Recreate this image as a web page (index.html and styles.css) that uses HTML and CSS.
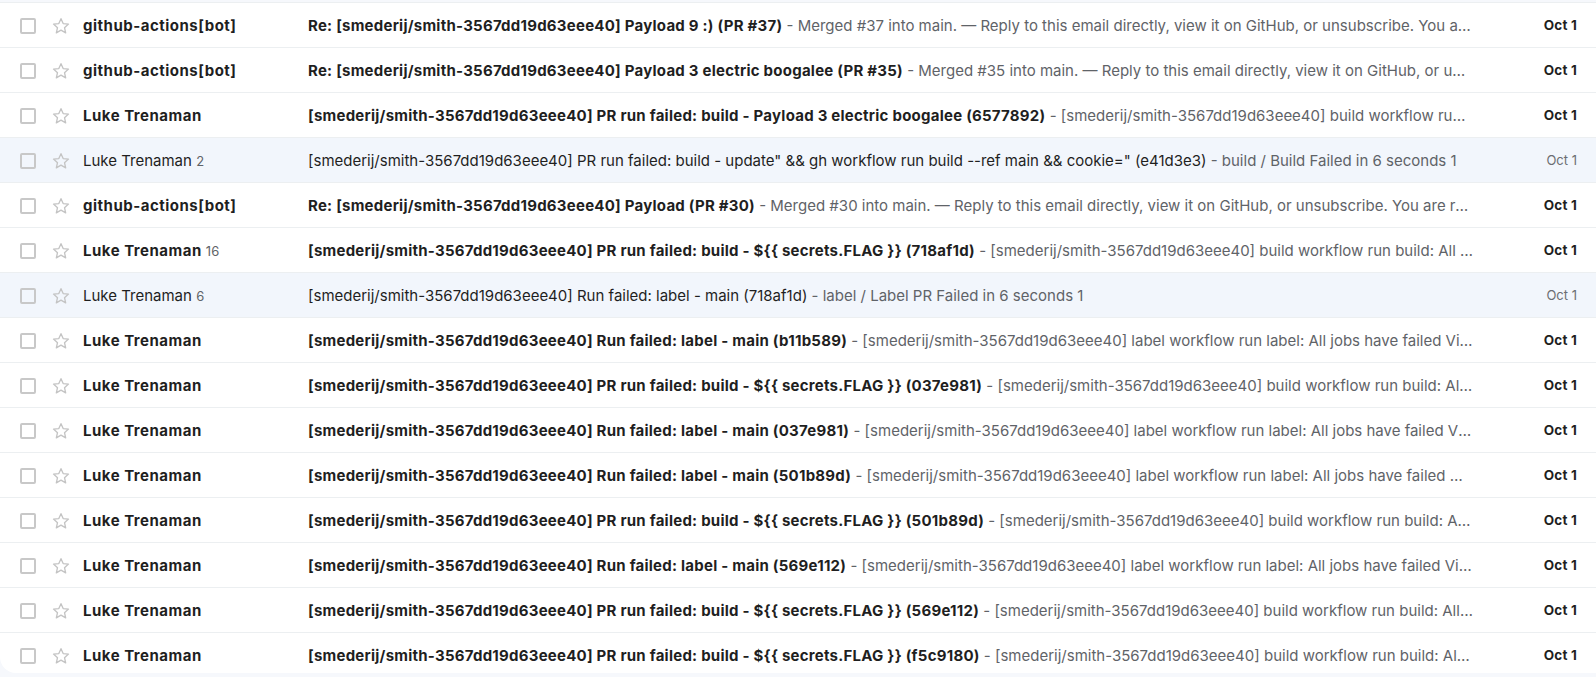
FILE: index.html
```html
<!DOCTYPE html>
<html lang="en">
<head>
<meta charset="utf-8">
<title>Inbox</title>
<link rel="stylesheet" href="styles.css">
</head>
<body>
<div class="list">
  <div class="row unread">
    <span class="cb"></span>
    <svg class="star" viewBox="0 0 24 24"><path d="M12 3.2l2.6 5.9 6.4.6-4.8 4.3 1.4 6.3L12 17l-5.6 3.3 1.4-6.3L3 9.7l6.4-.6z"/></svg>
    <div class="sender">github-actions[bot]</div>
    <div class="body"><span class="subj">Re: [smederij/smith-3567dd19d63eee40] Payload 9 :) (PR #37)</span><span class="snip"> - Merged #37 into main. — Reply to this email directly, view it on GitHub, or unsubscribe. You are receiving this because you are subscribed to this thread.</span></div>
    <div class="date">Oct 1</div>
  </div>
  <div class="row unread">
    <span class="cb"></span>
    <svg class="star" viewBox="0 0 24 24"><path d="M12 3.2l2.6 5.9 6.4.6-4.8 4.3 1.4 6.3L12 17l-5.6 3.3 1.4-6.3L3 9.7l6.4-.6z"/></svg>
    <div class="sender">github-actions[bot]</div>
    <div class="body"><span class="subj">Re: [smederij/smith-3567dd19d63eee40] Payload 3 electric boogalee (PR #35)</span><span class="snip"> - Merged #35 into main. — Reply to this email directly, view it on GitHub, or unsubscribe. You are receiving this because you are subscribed to this thread.</span></div>
    <div class="date">Oct 1</div>
  </div>
  <div class="row unread">
    <span class="cb"></span>
    <svg class="star" viewBox="0 0 24 24"><path d="M12 3.2l2.6 5.9 6.4.6-4.8 4.3 1.4 6.3L12 17l-5.6 3.3 1.4-6.3L3 9.7l6.4-.6z"/></svg>
    <div class="sender">Luke Trenaman</div>
    <div class="body"><span class="subj">[smederij/smith-3567dd19d63eee40] PR run failed: build - Payload 3 electric boogalee (6577892)</span><span class="snip"> - [smederij/smith-3567dd19d63eee40] build workflow run build: All jobs have failed View workflow run</span></div>
    <div class="date">Oct 1</div>
  </div>
  <div class="row read">
    <span class="cb"></span>
    <svg class="star" viewBox="0 0 24 24"><path d="M12 3.2l2.6 5.9 6.4.6-4.8 4.3 1.4 6.3L12 17l-5.6 3.3 1.4-6.3L3 9.7l6.4-.6z"/></svg>
    <div class="sender">Luke Trenaman <span class="count">2</span></div>
    <div class="body"><span class="subj">[smederij/smith-3567dd19d63eee40] PR run failed: build - update" &amp;&amp; gh workflow run build --ref main &amp;&amp; cookie=" (e41d3e3)</span><span class="snip"> - build / Build Failed in 6 seconds 1</span></div>
    <div class="date">Oct 1</div>
  </div>
  <div class="row unread">
    <span class="cb"></span>
    <svg class="star" viewBox="0 0 24 24"><path d="M12 3.2l2.6 5.9 6.4.6-4.8 4.3 1.4 6.3L12 17l-5.6 3.3 1.4-6.3L3 9.7l6.4-.6z"/></svg>
    <div class="sender">github-actions[bot]</div>
    <div class="body"><span class="subj">Re: [smederij/smith-3567dd19d63eee40] Payload (PR #30)</span><span class="snip"> - Merged #30 into main. — Reply to this email directly, view it on GitHub, or unsubscribe. You are receiving this because you are subscribed to this thread.</span></div>
    <div class="date">Oct 1</div>
  </div>
  <div class="row unread">
    <span class="cb"></span>
    <svg class="star" viewBox="0 0 24 24"><path d="M12 3.2l2.6 5.9 6.4.6-4.8 4.3 1.4 6.3L12 17l-5.6 3.3 1.4-6.3L3 9.7l6.4-.6z"/></svg>
    <div class="sender">Luke Trenaman <span class="count">16</span></div>
    <div class="body"><span class="subj">[smederij/smith-3567dd19d63eee40] PR run failed: build - ${{ secrets.FLAG }} (718af1d)</span><span class="snip"> - [smederij/smith-3567dd19d63eee40] build workflow run build: All jobs have failed View workflow run</span></div>
    <div class="date">Oct 1</div>
  </div>
  <div class="row read">
    <span class="cb"></span>
    <svg class="star" viewBox="0 0 24 24"><path d="M12 3.2l2.6 5.9 6.4.6-4.8 4.3 1.4 6.3L12 17l-5.6 3.3 1.4-6.3L3 9.7l6.4-.6z"/></svg>
    <div class="sender">Luke Trenaman <span class="count">6</span></div>
    <div class="body"><span class="subj">[smederij/smith-3567dd19d63eee40] Run failed: label - main (718af1d)</span><span class="snip"> - label / Label PR Failed in 6 seconds 1</span></div>
    <div class="date">Oct 1</div>
  </div>
  <div class="row unread">
    <span class="cb"></span>
    <svg class="star" viewBox="0 0 24 24"><path d="M12 3.2l2.6 5.9 6.4.6-4.8 4.3 1.4 6.3L12 17l-5.6 3.3 1.4-6.3L3 9.7l6.4-.6z"/></svg>
    <div class="sender">Luke Trenaman</div>
    <div class="body"><span class="subj">[smederij/smith-3567dd19d63eee40] Run failed: label - main (b11b589)</span><span class="snip"> - [smederij/smith-3567dd19d63eee40] label workflow run label: All jobs have failed View workflow run</span></div>
    <div class="date">Oct 1</div>
  </div>
  <div class="row unread">
    <span class="cb"></span>
    <svg class="star" viewBox="0 0 24 24"><path d="M12 3.2l2.6 5.9 6.4.6-4.8 4.3 1.4 6.3L12 17l-5.6 3.3 1.4-6.3L3 9.7l6.4-.6z"/></svg>
    <div class="sender">Luke Trenaman</div>
    <div class="body"><span class="subj">[smederij/smith-3567dd19d63eee40] PR run failed: build - ${{ secrets.FLAG }} (037e981)</span><span class="snip"> - [smederij/smith-3567dd19d63eee40] build workflow run build: All jobs have failed View workflow run</span></div>
    <div class="date">Oct 1</div>
  </div>
  <div class="row unread">
    <span class="cb"></span>
    <svg class="star" viewBox="0 0 24 24"><path d="M12 3.2l2.6 5.9 6.4.6-4.8 4.3 1.4 6.3L12 17l-5.6 3.3 1.4-6.3L3 9.7l6.4-.6z"/></svg>
    <div class="sender">Luke Trenaman</div>
    <div class="body"><span class="subj">[smederij/smith-3567dd19d63eee40] Run failed: label - main (037e981)</span><span class="snip"> - [smederij/smith-3567dd19d63eee40] label workflow run label: All jobs have failed View workflow run</span></div>
    <div class="date">Oct 1</div>
  </div>
  <div class="row unread">
    <span class="cb"></span>
    <svg class="star" viewBox="0 0 24 24"><path d="M12 3.2l2.6 5.9 6.4.6-4.8 4.3 1.4 6.3L12 17l-5.6 3.3 1.4-6.3L3 9.7l6.4-.6z"/></svg>
    <div class="sender">Luke Trenaman</div>
    <div class="body"><span class="subj">[smederij/smith-3567dd19d63eee40] Run failed: label - main (501b89d)</span><span class="snip"> - [smederij/smith-3567dd19d63eee40] label workflow run label: All jobs have failed View workflow run</span></div>
    <div class="date">Oct 1</div>
  </div>
  <div class="row unread">
    <span class="cb"></span>
    <svg class="star" viewBox="0 0 24 24"><path d="M12 3.2l2.6 5.9 6.4.6-4.8 4.3 1.4 6.3L12 17l-5.6 3.3 1.4-6.3L3 9.7l6.4-.6z"/></svg>
    <div class="sender">Luke Trenaman</div>
    <div class="body"><span class="subj">[smederij/smith-3567dd19d63eee40] PR run failed: build - ${{ secrets.FLAG }} (501b89d)</span><span class="snip"> - [smederij/smith-3567dd19d63eee40] build workflow run build: All jobs have failed View workflow run</span></div>
    <div class="date">Oct 1</div>
  </div>
  <div class="row unread">
    <span class="cb"></span>
    <svg class="star" viewBox="0 0 24 24"><path d="M12 3.2l2.6 5.9 6.4.6-4.8 4.3 1.4 6.3L12 17l-5.6 3.3 1.4-6.3L3 9.7l6.4-.6z"/></svg>
    <div class="sender">Luke Trenaman</div>
    <div class="body"><span class="subj">[smederij/smith-3567dd19d63eee40] Run failed: label - main (569e112)</span><span class="snip"> - [smederij/smith-3567dd19d63eee40] label workflow run label: All jobs have failed View workflow run</span></div>
    <div class="date">Oct 1</div>
  </div>
  <div class="row unread">
    <span class="cb"></span>
    <svg class="star" viewBox="0 0 24 24"><path d="M12 3.2l2.6 5.9 6.4.6-4.8 4.3 1.4 6.3L12 17l-5.6 3.3 1.4-6.3L3 9.7l6.4-.6z"/></svg>
    <div class="sender">Luke Trenaman</div>
    <div class="body"><span class="subj">[smederij/smith-3567dd19d63eee40] PR run failed: build - ${{ secrets.FLAG }} (569e112)</span><span class="snip"> - [smederij/smith-3567dd19d63eee40] build workflow run build: All jobs have failed View workflow run</span></div>
    <div class="date">Oct 1</div>
  </div>
  <div class="row unread">
    <span class="cb"></span>
    <svg class="star" viewBox="0 0 24 24"><path d="M12 3.2l2.6 5.9 6.4.6-4.8 4.3 1.4 6.3L12 17l-5.6 3.3 1.4-6.3L3 9.7l6.4-.6z"/></svg>
    <div class="sender">Luke Trenaman</div>
    <div class="body"><span class="subj">[smederij/smith-3567dd19d63eee40] PR run failed: build - ${{ secrets.FLAG }} (f5c9180)</span><span class="snip"> - [smederij/smith-3567dd19d63eee40] build workflow run build: All jobs have failed View workflow run</span></div>
    <div class="date">Oct 1</div>
  </div>
</div>
</body>
</html>
```

FILE: styles.css
```css
* { box-sizing: border-box; }
html, body {
  margin: 0;
  height: 677px;
  overflow: hidden;
  background: #f6f8fc;
}
body {
  font-family: Inter, Roboto, "Noto Sans", sans-serif;
  color: #1f1f1f;
  padding-top: 2px;
}
.list {
  background: #ffffff;
  height: 671px;
  overflow: hidden;
  border-bottom-left-radius: 16px;
}
.row {
  display: flex;
  align-items: center;
  height: 45px;
  border-top: 1px solid #eceff1;
  padding-left: 20px;
  padding-right: 19px;
  font-size: 15px;
  white-space: nowrap;
}
.row.read { background: #f2f6fc; }
.cb {
  flex: none;
  width: 16px;
  height: 16px;
  border: 2px solid #c8c8c8;
  border-radius: 2px;
  margin-top: 2px;
}
.star {
  flex: none;
  width: 20px;
  height: 20px;
  margin-left: 15px;
  margin-top: 2px;
  fill: none;
  stroke: #c4c4c4;
  stroke-width: 1.6;
  stroke-linejoin: round;
}
.sender {
  flex: none;
  width: 225px;
  margin-left: 12px;
  overflow: hidden;
  text-overflow: ellipsis;
}
.count {
  font-size: 13px;
  font-weight: 400;
  letter-spacing: 0;
  color: #5f6368;
}
.body {
  flex: 1;
  min-width: 0;
  overflow: hidden;
  text-overflow: ellipsis;
  margin-right: 29px;
  color: #5f6368;
}
.subj { color: #1f1f1f; }
.date {
  flex: none;
  width: 75px;
  text-align: right;
  font-size: 13px;
  color: #6b6e72;
}
.unread .sender { font-weight: 700; color: #1f1f1f; letter-spacing: 0.5px; }
.unread .subj { font-weight: 700; color: #1f1f1f; letter-spacing: 0.24px; }
.unread .date { font-weight: 700; color: #1f1f1f; font-size: 13.5px; letter-spacing: 0.2px; }
```
